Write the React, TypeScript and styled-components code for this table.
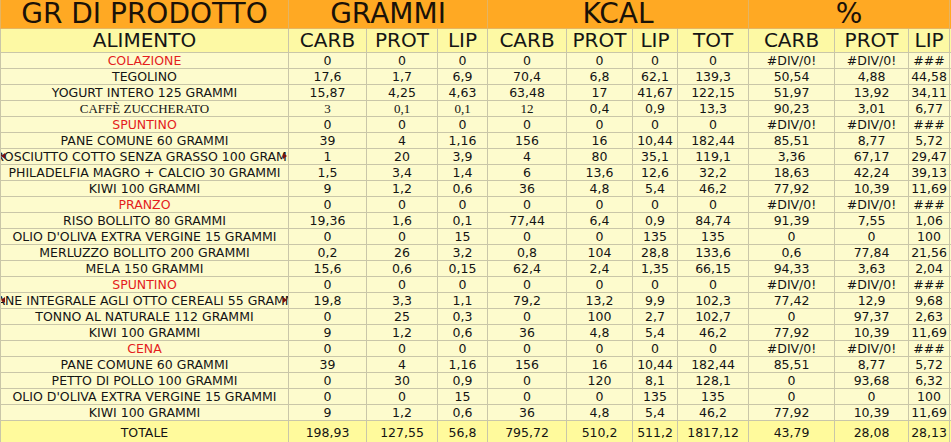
import React from 'react';
import styled, { createGlobalStyle, css } from 'styled-components';

const GlobalStyle = createGlobalStyle`
  html, body {
    margin: 0;
    padding: 0;
    overflow: hidden;
    background: #ffffff;
  }
`;

const palette = {
  orange: '#ffa923',
  header: '#fdf9a4',
  cell: '#fdfbcd',
  total: '#fffa9c',
  grid: '#c9c6a8',
  red: '#e41d1d',
  ink: '#141414',
};

const widths = [288, 78, 71, 50, 79, 66, 45, 71, 86, 74, 41, 40];

type Row = {
  name: string;
  meal?: boolean;
  serif?: number;
  clipped?: boolean;
  values: string[];
};

const zeroRow = (name: string): Row => ({
  name,
  meal: true,
  values: ['0', '0', '0', '0', '0', '0', '0', '#DIV/0!', '#DIV/0!', '###'],
});

const rows: Row[] = [
  zeroRow('COLAZIONE'),
  { name: 'TEGOLINO', values: ['17,6', '1,7', '6,9', '70,4', '6,8', '62,1', '139,3', '50,54', '4,88', '44,58'] },
  { name: 'YOGURT INTERO 125 GRAMMI', values: ['15,87', '4,25', '4,63', '63,48', '17', '41,67', '122,15', '51,97', '13,92', '34,11'] },
  { name: 'CAFFÈ ZUCCHERATO', serif: 4, values: ['3', '0,1', '0,1', '12', '0,4', '0,9', '13,3', '90,23', '3,01', '6,77'] },
  zeroRow('SPUNTINO'),
  { name: 'PANE COMUNE 60 GRAMMI', values: ['39', '4', '1,16', '156', '16', '10,44', '182,44', '85,51', '8,77', '5,72'] },
  { name: 'PROSCIUTTO COTTO SENZA GRASSO 100 GRAMMI', clipped: true, values: ['1', '20', '3,9', '4', '80', '35,1', '119,1', '3,36', '67,17', '29,47'] },
  { name: 'PHILADELFIA MAGRO + CALCIO 30 GRAMMI', values: ['1,5', '3,4', '1,4', '6', '13,6', '12,6', '32,2', '18,63', '42,24', '39,13'] },
  { name: 'KIWI 100 GRAMMI', values: ['9', '1,2', '0,6', '36', '4,8', '5,4', '46,2', '77,92', '10,39', '11,69'] },
  zeroRow('PRANZO'),
  { name: 'RISO BOLLITO 80 GRAMMI', values: ['19,36', '1,6', '0,1', '77,44', '6,4', '0,9', '84,74', '91,39', '7,55', '1,06'] },
  { name: "OLIO D'OLIVA EXTRA VERGINE 15 GRAMMI", values: ['0', '0', '15', '0', '0', '135', '135', '0', '0', '100'] },
  { name: 'MERLUZZO BOLLITO 200 GRAMMI', values: ['0,2', '26', '3,2', '0,8', '104', '28,8', '133,6', '0,6', '77,84', '21,56'] },
  { name: 'MELA 150 GRAMMI', values: ['15,6', '0,6', '0,15', '62,4', '2,4', '1,35', '66,15', '94,33', '3,63', '2,04'] },
  zeroRow('SPUNTINO'),
  { name: 'PANE INTEGRALE AGLI OTTO CEREALI 55 GRAMMI', clipped: true, values: ['19,8', '3,3', '1,1', '79,2', '13,2', '9,9', '102,3', '77,42', '12,9', '9,68'] },
  { name: 'TONNO AL NATURALE 112 GRAMMI', values: ['0', '25', '0,3', '0', '100', '2,7', '102,7', '0', '97,37', '2,63'] },
  { name: 'KIWI 100 GRAMMI', values: ['9', '1,2', '0,6', '36', '4,8', '5,4', '46,2', '77,92', '10,39', '11,69'] },
  zeroRow('CENA'),
  { name: 'PANE COMUNE 60 GRAMMI', values: ['39', '4', '1,16', '156', '16', '10,44', '182,44', '85,51', '8,77', '5,72'] },
  { name: 'PETTO DI POLLO 100 GRAMMI', values: ['0', '30', '0,9', '0', '120', '8,1', '128,1', '0', '93,68', '6,32'] },
  { name: "OLIO D'OLIVA EXTRA VERGINE 15 GRAMMI", values: ['0', '0', '15', '0', '0', '135', '135', '0', '0', '100'] },
  { name: 'KIWI 100 GRAMMI', values: ['9', '1,2', '0,6', '36', '4,8', '5,4', '46,2', '77,92', '10,39', '11,69'] },
];

const totals = ['198,93', '127,55', '56,8', '795,72', '510,2', '511,2', '1817,12', '43,79', '28,08', '28,13'];

const subHeads = ['CARB', 'PROT', 'LIP', 'CARB', 'PROT', 'LIP', 'TOT', 'CARB', 'PROT', 'LIP'];

const App = () => {
  return (
    <>
      <GlobalStyle />
      <Sheet>
        <colgroup>
          {widths.map((w, i) => (
            <col key={i} style={{ width: w }} />
          ))}
        </colgroup>
        <thead>
          <tr>
            <GroupHead>GR DI PRODOTTO</GroupHead>
            <GroupHead colSpan={3}>GRAMMI</GroupHead>
            <GroupHead colSpan={4}>KCAL</GroupHead>
            <GroupHead colSpan={3}>%</GroupHead>
            <GroupHead />
          </tr>
          <tr>
            <SubHead>ALIMENTO</SubHead>
            {subHeads.map((h, i) => (
              <SubHead key={i}>{h}</SubHead>
            ))}
            <SubHead />
          </tr>
        </thead>
        <tbody>
          {rows.map((row, r) => (
            <tr key={r}>
              <Cell $serif={row.serif !== undefined} $meal={row.meal}>
                {row.clipped ? (
                  <Overflow>
                    <span>{row.name}</span>
                    <Marker $side="left" />
                    <Marker $side="right" />
                  </Overflow>
                ) : (
                  row.name
                )}
              </Cell>
              {row.values.map((v, i) => (
                <Cell key={i} $serif={row.serif !== undefined && i < row.serif}>
                  {v}
                </Cell>
              ))}
              <Cell />
            </tr>
          ))}
          <tr>
            <TotalCell>TOTALE</TotalCell>
            {totals.map((v, i) => (
              <TotalCell key={i}>{v}</TotalCell>
            ))}
            <TotalCell />
          </tr>
        </tbody>
      </Sheet>
    </>
  );
};
export default App;

const Sheet = styled.table`
  border-collapse: collapse;
  table-layout: fixed;
  width: ${widths.reduce((a, b) => a + b, 0)}px;
  font-family: 'DejaVu Sans', Verdana, sans-serif;
  color: ${palette.ink};
`;

const baseCell = css`
  padding: 0;
  text-align: center;
  vertical-align: middle;
  white-space: nowrap;
  overflow: hidden;
  border: 1px solid ${palette.grid};
`;

const GroupHead = styled.th`
  ${baseCell};
  overflow: visible;
  height: 28px;
  background: ${palette.orange};
  border-color: #e5b462;
  border-top: none;
  font-size: 28px;
  font-weight: normal;
  line-height: 28px;
  color: #1a1208;
`;

const SubHead = styled.th`
  ${baseCell};
  overflow: visible;
  height: 23px;
  background: ${palette.header};
  font-size: 20px;
  font-weight: normal;
  line-height: 23px;
  color: #151515;
`;

const Cell = styled.td<{ $serif?: boolean; $meal?: boolean }>`
  ${baseCell};
  height: 15px;
  background: ${palette.cell};
  line-height: 15px;
  font-family: ${(p) => (p.$serif ? "'Liberation Serif', 'Times New Roman', serif" : "'DejaVu Sans', Verdana, sans-serif")};
  font-size: ${(p) => (p.$serif ? '13px' : '12.5px')};
  color: ${(p) => (p.$meal ? palette.red : palette.ink)};
`;

const TotalCell = styled.td`
  ${baseCell};
  height: 23px;
  background: ${palette.total};
  font-size: 12.5px;
  line-height: 23px;
  border-bottom: none;
`;

const Overflow = styled.div`
  position: relative;
  display: flex;
  justify-content: center;
  overflow: hidden;
  width: 100%;
`;

const Marker = styled.i<{ $side: 'left' | 'right' }>`
  position: absolute;
  top: 4px;
  ${(p) => (p.$side === 'left' ? 'left: 0;' : 'right: 1px;')}
  width: 0;
  height: 0;
  border-top: 3px solid transparent;
  border-bottom: 3px solid transparent;
  ${(p) =>
    p.$side === 'left'
      ? 'border-right: 4px solid #7a1010;'
      : 'border-left: 4px solid #7a1010;'}
`;
